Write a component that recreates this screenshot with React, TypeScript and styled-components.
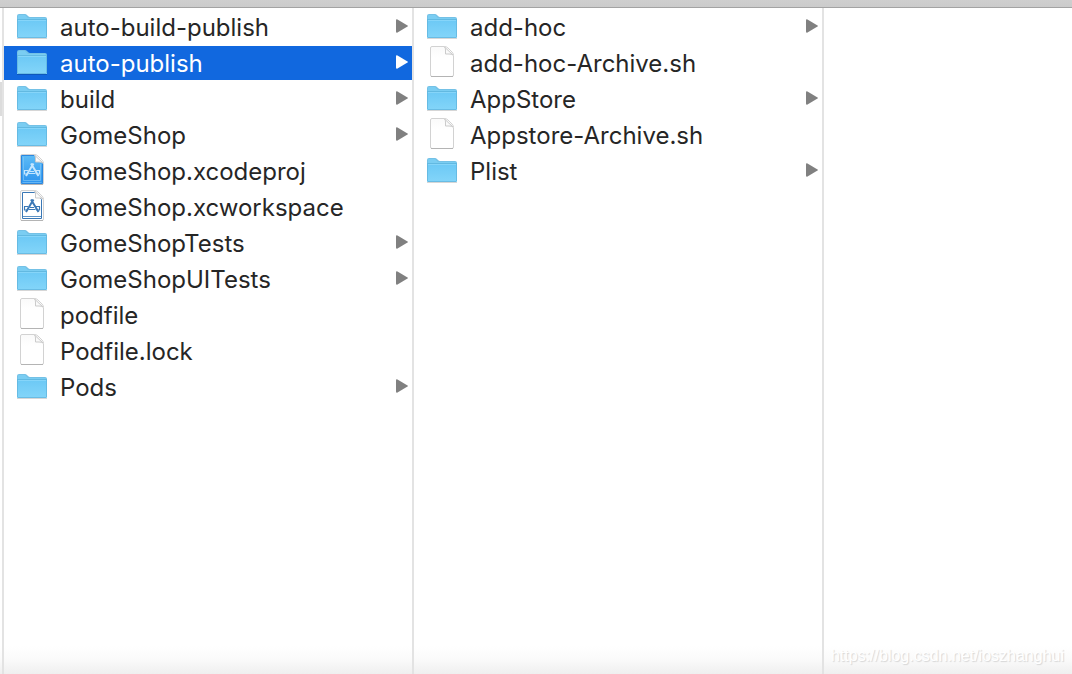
import React, { useState } from "react";
import styled, { createGlobalStyle } from "styled-components";

type Kind = "folder" | "file" | "project" | "workspace";
interface Entry {
  name: string;
  kind: Kind;
}

const GlobalStyle = createGlobalStyle`
  *, *::before, *::after { box-sizing: border-box; }
  body { margin: 0; background: #fff; font-family: Inter, "Liberation Sans", sans-serif; }
`;

const Window = styled.main`
  position: relative;
  display: flex;
  flex-direction: column;
  min-height: 100vh;
  background: linear-gradient(to top, #efefef, #fafafa 14px, #fff 28px);
`;

const Toolbar = styled.header`
  height: 8px;
  background: linear-gradient(#cfcfcf, #cbcbcb);
  border-bottom: 1px solid #a3a3a3;
`;

const Browser = styled.div`
  flex: 1;
  display: grid;
  grid-template-columns: 4px minmax(0, 410fr) minmax(0, 410fr) minmax(0, 248fr);
`;

const Column = styled.section<{ $last?: boolean }>`
  border-right: ${(p) => (p.$last ? "none" : "2px solid #e3e3e3")};
  padding-top: 2px;
`;

const ParentSelection = styled.div`
  height: 34px;
  margin-top: 72px;
  background: #dcdcdc;
`;

const List = styled.ul`
  display: flex;
  flex-direction: column;
  gap: 2px;
  margin: 0;
  padding: 0;
  list-style: none;
`;

const Row = styled.button<{ $selected: boolean }>`
  display: flex;
  align-items: center;
  gap: 12px;
  width: 100%;
  height: 34px;
  padding: 0 4px 0 12px;
  border: 0;
  outline: none;
  text-align: left;
  font: 400 24px/32px Inter, "Liberation Sans", sans-serif;
  color: ${(p) => (p.$selected ? "#fff" : "#262626")};
  background: ${(p) => (p.$selected ? "#1168df" : "transparent")};
`;

const Name = styled.span`
  flex: 1;
  min-width: 0;
  padding-top: 2px;
  overflow: hidden;
  white-space: nowrap;
`;

const Icon = styled.svg`
  flex: none;
  display: block;
`;

const Watermark = styled.span`
  position: absolute;
  right: 8px;
  bottom: 8px;
  font: 16px/20px "Liberation Sans", sans-serif;
  color: #fff;
  text-shadow: 1px 1px 1px #d6d6d6;
`;

function FolderIcon() {
  return (
    <Icon width="32" height="34" viewBox="0 -1 32 34" aria-hidden="true">
      <defs>
        <linearGradient id="folder" x1="0" y1="0" x2="0" y2="1">
          <stop offset="0" stopColor="#6bc8f5" />
          <stop offset="1" stopColor="#83d5f9" />
        </linearGradient>
      </defs>
      <path d="M1 27h30v1H1z" fill="#000" opacity=".16" />
      <path d="M1 5q0-2 2-2h6q1 0 2 1l1 1q1 1 2 1h15q2 0 2 2v18q0 1-1 1H2q-1 0-1-1z" fill="#74c1e6" />
      <path d="M2 5q0-1 1-1h6l3 3h17q1 0 1 1H2z" fill="#7acdf2" />
      <path d="M1 8h30v18q0 1-1 1H2q-1 0-1-1z" fill="url(#folder)" />
      <path d="M1 8.500h30" stroke="#62b9e1" />
      <path d="M1.500 9v17M30.500 9v17M2 26.500h28" stroke="#63b7df" opacity=".8" />
      <path d="M2 9.500h28" stroke="#86d5f9" />
    </Icon>
  );
}

function AppGlyph({ color }: { color: string }) {
  return (
    <g fill="none" stroke={color}>
      <path d="M15 9.500l1.500 2.500 6 10M17.500 9.500 16 12 10 22" strokeWidth="2" />
      <path d="M8 16.500h4M20 16.500h4M14 17.500h4" strokeWidth="1.200" />
      <path d="M8.500 16.500v3.500h3M23.500 16.500v3.500h-3M12.500 19.500h7" strokeWidth="1.200" />
    </g>
  );
}

function DocumentIcon({ kind }: { kind: Kind }) {
  const project = kind === "project";
  const framed = kind !== "file";
  return (
    <Icon width="32" height="34" viewBox="0 0 32 34" aria-hidden="true">
      <defs>
        <linearGradient id="paper" x1="0" y1="0" x2="0" y2="1">
          <stop offset="0" stopColor="#fafafa" />
          <stop offset=".4" stopColor="#fff" />
        </linearGradient>
        <linearGradient id="project" x1="0" y1="0" x2="0" y2="1">
          <stop offset="0" stopColor="#5dbcf6" />
          <stop offset="1" stopColor="#2c93ee" />
        </linearGradient>
      </defs>
      <path
        d="M4.500 2q0-1.500 1.500-1.500h12.500q2 0 3.500 1.500l4 4q1.500 1.500 1.500 3.500V29q0 1.500-1.500 1.500H6q-1.500 0-1.500-1.500z"
        fill="url(#paper)"
        stroke="#d2d2d2"
      />
      <path d="M5 30.500h22" stroke="#b4b4b4" />
      {project && (
        <>
          <path d="M5.500 1.500h13l8 8v20h-21z" fill="url(#project)" stroke="#2b88e0" />
          <path d="M7.500 3v23.500h17V10M6.500 28.500h19" fill="none" stroke="#7cc4f8" opacity=".7" />
        </>
      )}
      {kind === "workspace" && (
        <>
          <path d="M6.500 2.500h12l7 7v19h-19z" fill="#fff" stroke="#3977b5" />
          <path d="M7 26.500h18" stroke="#5d93c6" />
        </>
      )}
      {framed && <AppGlyph color={project ? "#c4e6ff" : "#3b78b6"} />}
      <path d="M18.500 1l8.500 8q-1.500-1-4-1h-3.500V4q0-2-1-3z" fill="#fafafa" stroke="#cbcbcb" />
    </Icon>
  );
}

function Arrow({ selected }: { selected: boolean }) {
  return (
    <Icon width="12" height="34" viewBox="0 0 12 34" aria-hidden="true">
      <path
        d="M0 10.400q0-1.600 1.500-.8l10 5.800q1 .6 0 1.200l-10 5.800q-1.500.8-1.500-.8z"
        fill={selected ? "#fff" : "#808080"}
      />
    </Icon>
  );
}

function EntryList({ entries, initial }: { entries: Entry[]; initial?: string }) {
  const [selected, setSelected] = useState(initial);
  return (
    <List>
      {entries.map(({ name, kind }) => (
        <li key={name}>
          <Row
            type="button"
            $selected={name === selected}
            aria-pressed={name === selected}
            onClick={() => setSelected(name)}
          >
            {kind === "folder" ? <FolderIcon /> : <DocumentIcon kind={kind} />}
            <Name>{name}</Name>
            {kind === "folder" && <Arrow selected={name === selected} />}
          </Row>
        </li>
      ))}
    </List>
  );
}

const projectEntries: Entry[] = [
  { name: "auto-build-publish", kind: "folder" },
  { name: "auto-publish", kind: "folder" },
  { name: "build", kind: "folder" },
  { name: "GomeShop", kind: "folder" },
  { name: "GomeShop.xcodeproj", kind: "project" },
  { name: "GomeShop.xcworkspace", kind: "workspace" },
  { name: "GomeShopTests", kind: "folder" },
  { name: "GomeShopUITests", kind: "folder" },
  { name: "podfile", kind: "file" },
  { name: "Podfile.lock", kind: "file" },
  { name: "Pods", kind: "folder" },
];

const publishEntries: Entry[] = [
  { name: "add-hoc", kind: "folder" },
  { name: "add-hoc-Archive.sh", kind: "file" },
  { name: "AppStore", kind: "folder" },
  { name: "Appstore-Archive.sh", kind: "file" },
  { name: "Plist", kind: "folder" },
];

export default function App() {
  return (
    <Window>
      <GlobalStyle />
      <Toolbar />
      <Browser>
        <Column>
          <ParentSelection />
        </Column>
        <Column>
          <EntryList entries={projectEntries} initial="auto-publish" />
        </Column>
        <Column>
          <EntryList entries={publishEntries} />
        </Column>
        <Column $last />
      </Browser>
      <Watermark>https://blog.csdn.net/ioszhanghui</Watermark>
    </Window>
  );
}
